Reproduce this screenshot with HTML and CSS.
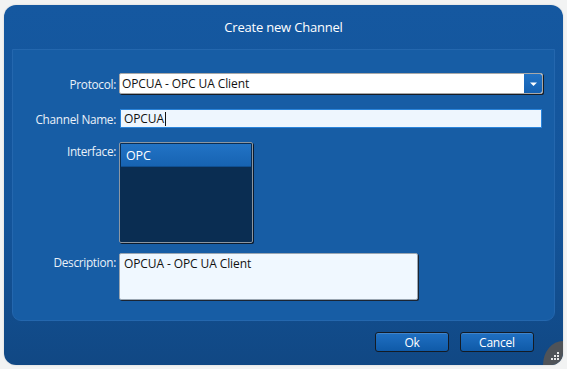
FILE: index.html
```html
<!DOCTYPE html>
<html>
<head>
<meta charset="utf-8">
<link rel="stylesheet" href="styles.css">
</head>
<body>
<div class="dialog">
  <div class="title">Create new Channel</div>
  <div class="panel">
    <div class="form">
      <label class="lbl mid">Protocol:</label>
      <div class="combo">
        <span class="combo-text">OPCUA - OPC UA Client</span>
        <span class="combo-btn"><svg width="9" height="6" viewBox="0 0 9 6"><path d="M1 1.5 H8 L4.5 5 Z" fill="#fff"/></svg></span>
      </div>
      <label class="lbl mid">Channel Name:</label>
      <div class="input">OPCUA<span class="caret"></span></div>
      <label class="lbl top">Interface:</label>
      <div class="listbox">
        <div class="item sel">OPC</div>
      </div>
      <label class="lbl top">Description:</label>
      <div class="textarea">OPCUA - OPC UA Client</div>
    </div>
  </div>
  <div class="footer">
    <button class="btn">Ok</button>
    <button class="btn">Cancel</button>
  </div>
  <div class="grip">
    <svg width="12" height="12" viewBox="0 0 12 12">
      <g fill="#e8e8e8">
        <rect x="8" y="2" width="2" height="2"/>
        <rect x="5" y="5" width="2" height="2"/>
        <rect x="8" y="5" width="2" height="2"/>
        <rect x="2" y="8" width="2" height="2"/>
        <rect x="5" y="8" width="2" height="2"/>
        <rect x="8" y="8" width="2" height="2"/>
      </g>
    </svg>
  </div>
</div>
</body>
</html>
```
FILE: styles.css
```css
html, body {
  margin: 0;
  padding: 0;
  background: #f2f3f3;
  width: 567px;
  height: 369px;
  overflow: hidden;
  font-family: "Open Sans", "Noto Sans", "Liberation Sans", sans-serif;
}
.dialog {
  position: relative;
  margin: 5px 4px 0 4px;
  height: 360px;
  border-radius: 12px;
  background: linear-gradient(#1558a0, #13549a 60%, #114884);
  display: flex;
  flex-direction: column;
  overflow: hidden;
  box-shadow: 0 0 2px rgba(0,0,0,0.15);
}
.title {
  height: 44px;
  display: flex;
  align-items: center;
  justify-content: center;
  color: #ffffff;
  font-size: 13px;
  letter-spacing: -0.2px;
}
.panel {
  margin: 0 8px;
  height: 272px;
  box-sizing: border-box;
  background: #175da5;
  border: 1px solid #2467ae;
  border-radius: 0 0 9px 9px;
}
.form {
  display: grid;
  grid-template-columns: 103px 1fr;
  column-gap: 3px;
  padding: 23px 11px 0 0;
  align-items: start;
}
.lbl {
  color: #eaf1f9;
  font-size: 11.8px;
  text-align: right;
  letter-spacing: -0.3px;
  line-height: 16px;
}
.lbl.mid { align-self: center; }
.lbl.top { padding-top: 1px; }
.combo {
  height: 21px;
  box-sizing: border-box;
  background: #ffffff;
  border: 1px solid #a8a8a8;
  border-radius: 2px;
  box-shadow: 1px 1px 0 #161c24;
  display: flex;
  align-items: center;
  font-size: 12px;
  color: #111;
}
.combo-text {
  flex: 1;
  padding-left: 2px;
  letter-spacing: -0.1px;
}
.combo-btn {
  width: 18px;
  height: 19px;
  background: linear-gradient(#2272c4, #1461b2);
  display: flex;
  align-items: center;
  justify-content: center;
  border-radius: 0 2px 2px 0;
}
.input {
  margin-top: 15px;
  margin-left: 1px;
  margin-right: 1px;
  height: 19px;
  box-sizing: border-box;
  background: #eef6fe;
  border: 1px solid #2a84da;
  font-size: 12px;
  line-height: 17px;
  padding-left: 3px;
  color: #111;
  letter-spacing: -0.1px;
  display: flex;
  align-items: center;
}
.form > .lbl:nth-child(3) { margin-top: 15px; }
.caret {
  display: inline-block;
  width: 1px;
  height: 14px;
  background: #111;
  margin-left: 1px;
}
.listbox {
  margin-top: 14px;
  width: 134px;
  height: 101px;
  box-sizing: border-box;
  background: #0a2d52;
  border: 1px solid #8c97a3;
  border-radius: 2px;
  padding: 1px;
  box-shadow: 1px 1px 0 #0b1a2c;
}
.form > .lbl:nth-child(5) { margin-top: 14px; }
.item {
  height: 22px;
  display: flex;
  align-items: center;
  padding-left: 5px;
  color: #fff;
  font-size: 12.5px;
  font-weight: 400;
  letter-spacing: -0.1px;
}
.item.sel {
  background: linear-gradient(#2273c5, #1763b2);
  border-bottom: 1px solid #0f4f92;
}
.textarea {
  margin-top: 10px;
  width: 299px;
  height: 47px;
  box-sizing: border-box;
  background: #f0f8ff;
  border: 1px solid #9aa6b2;
  border-radius: 2px;
  box-shadow: 1px 1px 0 #1b2533;
  padding: 1px 4px;
  font-size: 12px;
  color: #111;
  letter-spacing: -0.1px;
}
.form > .lbl:nth-child(7) { margin-top: 10px; }
.footer {
  display: flex;
  justify-content: flex-end;
  gap: 11px;
  padding: 11px 29px 0 0;
}
.btn {
  width: 74px;
  height: 20px;
  box-sizing: border-box;
  border: 1px solid #141b24;
  border-radius: 3px;
  background: linear-gradient(#2070c2, #0f5aa8);
  color: #ffffff;
  font-family: "Open Sans", "Noto Sans", "Liberation Sans", sans-serif;
  font-size: 12px;
  padding: 0;
  line-height: 17px;
  letter-spacing: -0.2px;
  box-shadow: inset 0 1px 0 rgba(255,255,255,0.15);
}
.grip {
  position: absolute;
  right: 0;
  bottom: 0;
  width: 20px;
  height: 24px;
  background: #4f5358;
  border-top-left-radius: 20px 24px;
  display: flex;
  align-items: flex-end;
  justify-content: flex-end;
  padding: 0 2px 3px 0;
  box-sizing: border-box;
}
```
